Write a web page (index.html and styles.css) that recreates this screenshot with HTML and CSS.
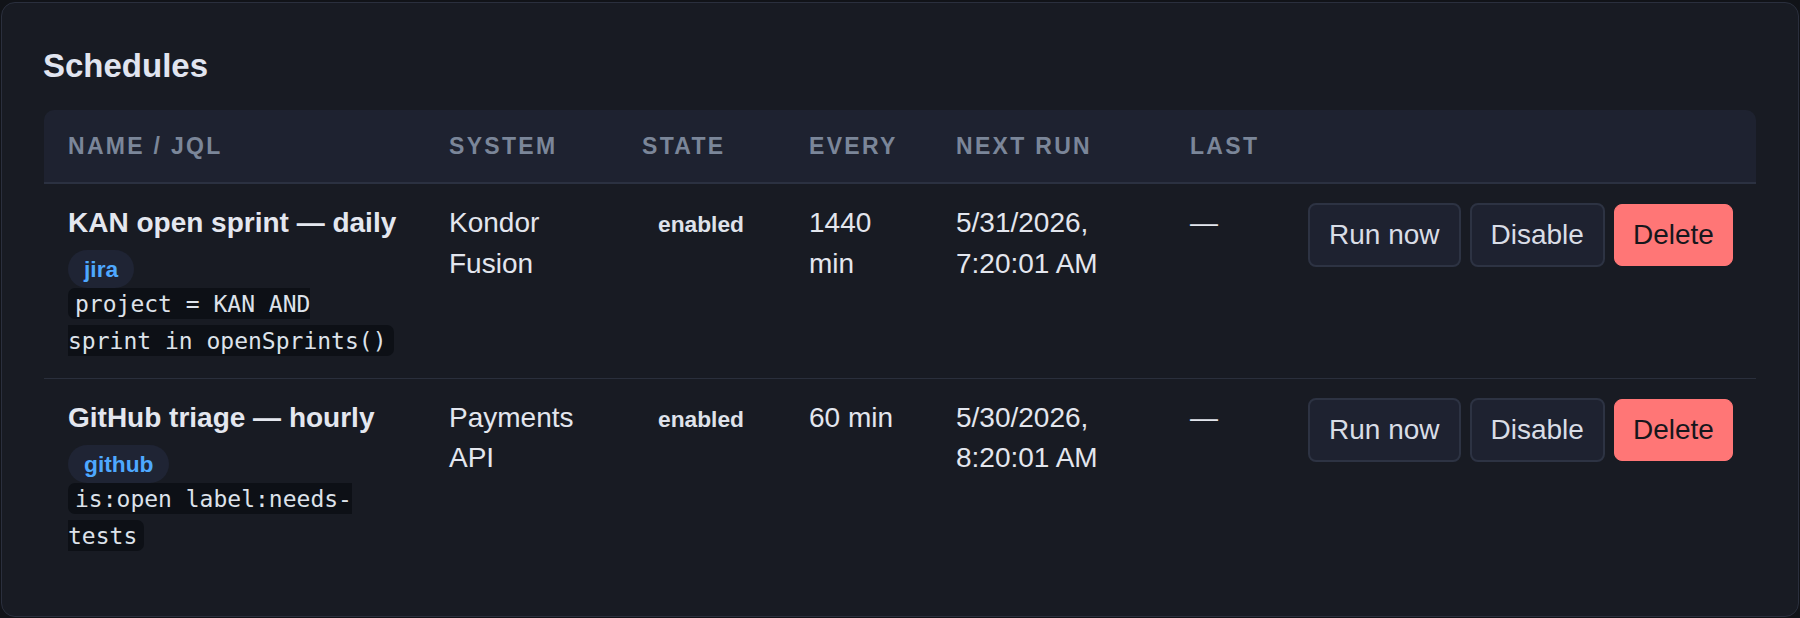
FILE: index.html
```html
<!DOCTYPE html>
<html lang="en">
<head>
<meta charset="utf-8">
<title>Schedules</title>
<link rel="stylesheet" href="styles.css">
</head>
<body>
<section class="card">
  <h2 class="card-title">Schedules</h2>
  <table class="schedules">
    <colgroup>
      <col class="c-name">
      <col class="c-system">
      <col class="c-state">
      <col class="c-every">
      <col class="c-next">
      <col class="c-last">
      <col class="c-actions">
    </colgroup>
    <thead>
      <tr>
        <th>Name / JQL</th>
        <th>System</th>
        <th>State</th>
        <th>Every</th>
        <th>Next run</th>
        <th>Last</th>
        <th></th>
      </tr>
    </thead>
    <tbody>
      <tr>
        <td>
          <div class="sched-name">KAN open sprint — daily</div>
          <div class="sched-source"><span class="pill">jira</span></div>
          <div class="sched-query"><code>project = KAN AND sprint in openSprints()</code></div>
        </td>
        <td>Kondor Fusion</td>
        <td><span class="state">enabled</span></td>
        <td>1440 min</td>
        <td>5/31/2026, 7:20:01 AM</td>
        <td>—</td>
        <td>
          <div class="actions">
            <button class="btn">Run now</button>
            <button class="btn">Disable</button>
            <button class="btn btn-danger">Delete</button>
          </div>
        </td>
      </tr>
      <tr>
        <td>
          <div class="sched-name">GitHub triage — hourly</div>
          <div class="sched-source"><span class="pill">github</span></div>
          <div class="sched-query"><code>is:open label:needs-tests</code></div>
        </td>
        <td>Payments API</td>
        <td><span class="state">enabled</span></td>
        <td>60 min</td>
        <td>5/30/2026, 8:20:01 AM</td>
        <td>—</td>
        <td>
          <div class="actions">
            <button class="btn">Run now</button>
            <button class="btn">Disable</button>
            <button class="btn btn-danger">Delete</button>
          </div>
        </td>
      </tr>
    </tbody>
  </table>
</section>
</body>
</html>
```

FILE: styles.css
```css
html, body {
  margin: 0;
}

body {
  background: #111318;
  padding: 2px 1px;
  font-family: "Liberation Sans", Arial, sans-serif;
  color: #e3e6ee;
}

.card {
  background: #181b23;
  border: 1px solid #2a2f3d;
  border-radius: 14px;
  padding: 42px;
}

.card-title {
  margin: 1px 0 24px -1px;
  font-size: 33px;
  line-height: 40px;
  font-weight: 700;
  color: #e1e5f0;
}

.schedules {
  width: 100%;
  table-layout: fixed;
  border-collapse: separate;
  border-spacing: 0;
  font-size: 28px;
  line-height: 40.6px;
}

.c-name { width: 381px; }
.c-system { width: 193px; }
.c-state { width: 167px; }
.c-every { width: 147px; }
.c-next { width: 234px; }
.c-last { width: 118px; }

.schedules th {
  background: #1e2230;
  height: 72px;
  padding: 0 24px;
  border-bottom: 2px solid #2b3141;
  text-align: left;
  font-size: 23px;
  line-height: 24px;
  font-weight: 700;
  letter-spacing: 0.1em;
  text-transform: uppercase;
  color: #7b8699;
}

.schedules th:first-child { border-top-left-radius: 10px; }
.schedules th:last-child { border-top-right-radius: 10px; }

.schedules td {
  vertical-align: top;
  padding: 19px 24px 20px;
}

.schedules tbody tr:not(:last-child) td {
  border-bottom: 1px solid #2a2f3c;
  padding-bottom: 19px;
}

.sched-name {
  font-weight: 700;
  color: #e4e7ef;
}

.sched-source {
  margin-top: 4.4px;
  height: 38px;
}

.pill {
  display: inline-block;
  height: 38px;
  line-height: 38px;
  padding: 0 16px;
  border-radius: 19px;
  background: #1f2434;
  color: #4ea8ff;
  font-size: 22.75px;
  font-weight: 700;
}

.sched-query {
  font-family: "DejaVu Sans Mono", monospace;
  font-size: 23px;
  line-height: 36.4px;
}

.sched-query code {
  font-family: inherit;
  background: #0d1016;
  color: #dde2ea;
  padding: 2.5px 7px;
  border-radius: 7px;
}

.state {
  display: inline-block;
  padding: 0 16px;
  font-size: 22.75px;
  font-weight: 700;
  color: #dfe2ea;
}

.actions {
  display: flex;
  align-items: center;
  gap: 9px;
}

.btn {
  font-family: "Liberation Sans", Arial, sans-serif;
  font-size: 28px;
  line-height: 32px;
  padding: 14px 19px;
  border: 2px solid #2d3343;
  border-radius: 8px;
  background: #1e2230;
  color: #d9dde6;
  white-space: nowrap;
  cursor: pointer;
}

.btn-danger {
  border: 1px solid #ff7676;
  padding: 14px 18px;
  background: #ff7676;
  color: #16171c;
}
```
